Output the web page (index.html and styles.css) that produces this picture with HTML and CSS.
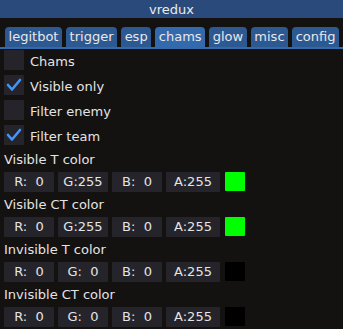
FILE: index.html
```html
<!DOCTYPE html>
<html lang="en">
<head>
  <meta charset="UTF-8">
  <meta name="viewport" content="width=device-width, initial-scale=1.0">
  <title>vredux</title>
  <link rel="stylesheet" href="styles.css">
</head>
<body>
  <div class="window">
    <header class="title-bar">vredux</header>

    <nav class="tabs">
      <div class="tab">legitbot</div>
      <div class="tab">trigger</div>
      <div class="tab">esp</div>
      <div class="tab active">chams</div>
      <div class="tab">glow</div>
      <div class="tab">misc</div>
      <div class="tab">config</div>
    </nav>

    <main class="content">
      <!-- Checkboxes -->
      <div class="check-row">
        <span class="checkbox"></span>
        <span>Chams</span>
      </div>
      <div class="check-row">
        <span class="checkbox"><svg viewBox="0 0 20 20"><polyline points="4,10 8,14.5 16,5"/></svg></span>
        <span>Visible only</span>
      </div>
      <div class="check-row">
        <span class="checkbox"></span>
        <span>Filter enemy</span>
      </div>
      <div class="check-row">
        <span class="checkbox"><svg viewBox="0 0 20 20"><polyline points="4,10 8,14.5 16,5"/></svg></span>
        <span>Filter team</span>
      </div>

      <!-- Colors -->
      <div class="color-label">Visible T color</div>
      <div class="color-row">
        <span class="field">R:  0</span>
        <span class="field">G:255</span>
        <span class="field">B:  0</span>
        <span class="field">A:255</span>
        <span class="swatch green"></span>
      </div>

      <div class="color-label">Visible CT color</div>
      <div class="color-row">
        <span class="field">R:  0</span>
        <span class="field">G:255</span>
        <span class="field">B:  0</span>
        <span class="field">A:255</span>
        <span class="swatch green"></span>
      </div>

      <div class="color-label">Invisible T color</div>
      <div class="color-row">
        <span class="field">R:  0</span>
        <span class="field">G:  0</span>
        <span class="field">B:  0</span>
        <span class="field">A:255</span>
        <span class="swatch black"></span>
      </div>

      <div class="color-label">Invisible CT color</div>
      <div class="color-row">
        <span class="field">R:  0</span>
        <span class="field">G:  0</span>
        <span class="field">B:  0</span>
        <span class="field">A:255</span>
        <span class="swatch black"></span>
      </div>
    </main>
  </div>
</body>
</html>
```

FILE: styles.css
```css
/* General Styles */
body {
  font-family: 'DejaVu Sans', Verdana, sans-serif;
  font-size: 13px;
  margin: 0;
  padding: 0;
  background-color: #141111;
  color: #e4e4e4;
  width: 343px;
  height: 329px;
  overflow: hidden;
}

.title-bar {
  height: 18px;
  line-height: 19px;
  text-align: center;
  background-color: #294a7a;
  color: #ececec;
}

/* Tabs */
.tabs {
  display: flex;
  gap: 4px;
  margin-top: 9px;
  padding: 0 4px 0 5px;
  border-bottom: 2px solid #3369ad;
}

.tab {
  flex: auto;
  min-width: 0;
  height: 20px;
  line-height: 20px;
  padding: 0 2px;
  text-align: center;
  background-color: #2d5993;
  border-radius: 4px 4px 0 0;
  color: #e8e8e8;
}

.tab.active {
  background-color: #3369ad;
}

.content {
  padding: 1px 4px 0;
}

/* Checkboxes */
.check-row {
  display: flex;
  align-items: center;
  gap: 6px;
  height: 20px;
  margin-bottom: 5px;
}

.check-row span:last-child {
  padding-top: 2px;
}

.checkbox {
  width: 20px;
  height: 20px;
  background-color: #25242b;
  border-radius: 1px;
}

.checkbox svg {
  display: block;
  width: 20px;
  height: 20px;
}

.checkbox polyline {
  fill: none;
  stroke: #4296fa;
  stroke-width: 2.6;
  stroke-linecap: round;
  stroke-linejoin: round;
}

/* Color editors */
.color-label {
  height: 22px;
  line-height: 22px;
}

.check-row + .color-label {
  margin-top: -1px;
}

.color-row {
  display: flex;
  gap: 4px;
  height: 20px;
  padding: 1px 0 2px;
}

.field {
  width: 50px;
  height: 20px;
  line-height: 20px;
  text-align: center;
  white-space: pre;
  background-color: #25242b;
  border-radius: 1px;
}

.field:nth-child(4) {
  width: 54px;
}

.swatch {
  width: 20px;
  height: 19px;
  margin-left: 1px;
  border-radius: 1px;
}

.green {
  background-color: #00ff00;
}

.black {
  background-color: #000000;
}
```
